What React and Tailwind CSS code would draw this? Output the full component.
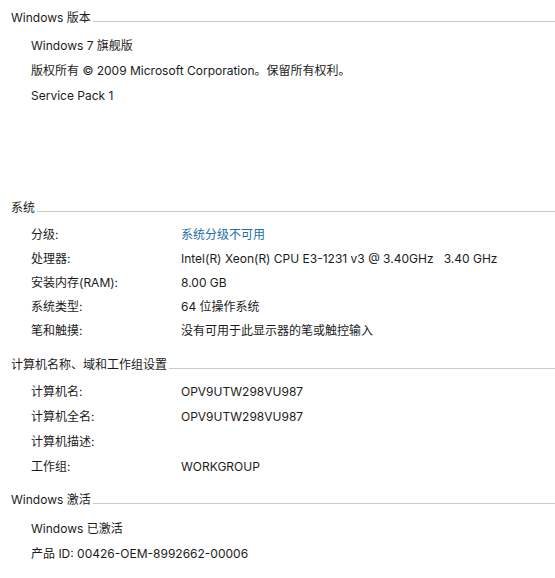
import React from 'react';

const font = { fontFamily: 'Inter, "Noto Sans CJK SC", sans-serif' };

function Header({ title, className = '' }) {
  return (
    <div className={`flex items-center h-[24px] pl-[11px] ${className}`}>
      <span className="whitespace-nowrap">{title}</span>
      <div className="flex-1 h-px bg-[#c9c9c9] ml-[2px] mt-[7px]"></div>
    </div>
  );
}

function Row({ label, value, link, h = 'h-[25px]' }) {
  return (
    <div className={`flex items-center ${h} pl-[31px]`}>
      <span className="w-[150px] shrink-0 whitespace-nowrap">{label}</span>
      <span className={`whitespace-pre ${link ? 'text-[#1c6ea6]' : ''}`}>{value}</span>
    </div>
  );
}

function Line({ text }) {
  return <div className="flex items-center h-[25px] pl-[31px] whitespace-nowrap">{text}</div>;
}

export default function App() {
  return (
    <div style={font} className="w-[555px] h-[578px] bg-white text-[12px] text-[#1b1b1b] pt-[6px] overflow-hidden">
      <Header title="Windows 版本" />
      <div className="mt-[3px]">
        <Line text="Windows 7 旗舰版" />
        <Line text="版权所有 © 2009 Microsoft Corporation。保留所有权利。" />
        <Line text="Service Pack 1" />
      </div>

      <Header title="系统" className="mt-[88px]" />
      <div className="mt-[3px]">
        <Row h="h-[24px]" label="分级:" value="系统分级不可用" link />
        <Row h="h-[24px]" label="处理器:" value="Intel(R) Xeon(R) CPU E3-1231 v3 @ 3.40GHz   3.40 GHz" />
        <Row h="h-[24px]" label="安装内存(RAM):" value="8.00 GB" />
        <Row h="h-[24px]" label="系统类型:" value="64 位操作系统" />
        <Row h="h-[24px]" label="笔和触摸:" value="没有可用于此显示器的笔或触控输入" />
      </div>

      <Header title="计算机名称、域和工作组设置" className="mt-[10px]" />
      <div className="mt-[2px]">
        <Row label="计算机名:" value="OPV9UTW298VU987" />
        <Row label="计算机全名:" value="OPV9UTW298VU987" />
        <Row label="计算机描述:" value="" />
        <Row label="工作组:" value="WORKGROUP" />
      </div>

      <Header title="Windows 激活" className="mt-[9px]" />
      <div className="mt-[4px]">
        <Line text="Windows 已激活" />
        <Line text="产品 ID: 00426-OEM-8992662-00006" />
      </div>
    </div>
  );
}
